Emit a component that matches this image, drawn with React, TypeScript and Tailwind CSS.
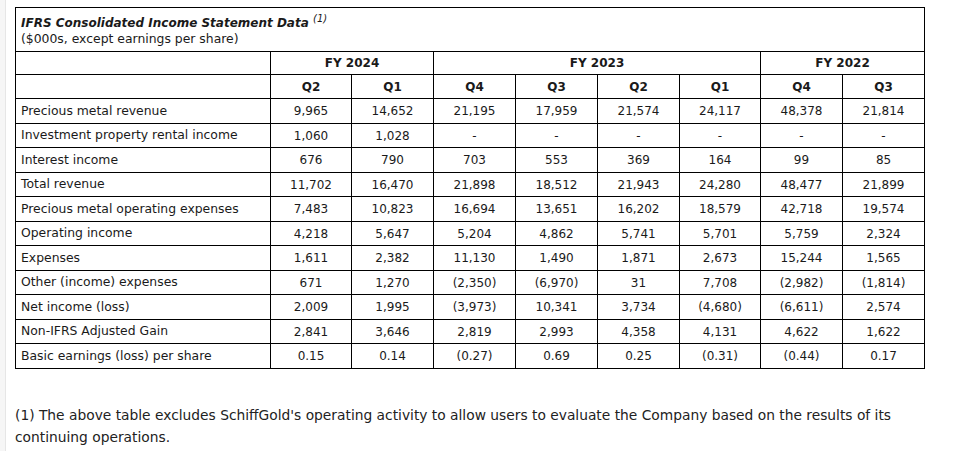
import React from "react";

const cols = ["Q2", "Q1", "Q4", "Q3", "Q2", "Q1", "Q4", "Q3"];

const rows: [string, string[]][] = [
  ["Precious metal revenue", ["9,965", "14,652", "21,195", "17,959", "21,574", "24,117", "48,378", "21,814"]],
  ["Investment property rental income", ["1,060", "1,028", "-", "-", "-", "-", "-", "-"]],
  ["Interest income", ["676", "790", "703", "553", "369", "164", "99", "85"]],
  ["Total revenue", ["11,702", "16,470", "21,898", "18,512", "21,943", "24,280", "48,477", "21,899"]],
  ["Precious metal operating expenses", ["7,483", "10,823", "16,694", "13,651", "16,202", "18,579", "42,718", "19,574"]],
  ["Operating income", ["4,218", "5,647", "5,204", "4,862", "5,741", "5,701", "5,759", "2,324"]],
  ["Expenses", ["1,611", "2,382", "11,130", "1,490", "1,871", "2,673", "15,244", "1,565"]],
  ["Other (income) expenses", ["671", "1,270", "(2,350)", "(6,970)", "31", "7,708", "(2,982)", "(1,814)"]],
  ["Net income (loss)", ["2,009", "1,995", "(3,973)", "10,341", "3,734", "(4,680)", "(6,611)", "2,574"]],
  ["Non-IFRS Adjusted Gain", ["2,841", "3,646", "2,819", "2,993", "4,358", "4,131", "4,622", "1,622"]],
  ["Basic earnings (loss) per share", ["0.15", "0.14", "(0.27)", "0.69", "0.25", "(0.31)", "(0.44)", "0.17"]],
];

const widths = [255, 81, 82, 82, 82, 82, 81, 82, 82];

export default function App() {
  return (
    <div
      className="flex min-h-[451px] w-[968px] bg-white text-[#1a1a1a]"
      style={{ fontFamily: '"DejaVu Sans", Verdana, sans-serif' }}
    >
      <div className="w-[6px] shrink-0 border-r border-[#e6e6e6] bg-[#f6f6f6]" />
      <div className="flex flex-col pl-[9px] pt-[7px]">
        <table className="w-[910px] table-fixed border-collapse text-[12px]">
          <colgroup>
            {widths.map((w, i) => (
              <col key={i} style={{ width: w }} />
            ))}
          </colgroup>
          <tbody>
            <tr className="h-[44px]">
              <td colSpan={9} className="border border-black px-[5px] pt-[5px] pb-[3px] align-middle leading-[16px]">
                <div className="font-bold italic text-[12px]">
                  IFRS Consolidated Income Statement Data{" "}
                  <sup className="text-[10px] font-normal">(1)</sup>
                </div>
                <div className="text-[12.4px]">($000s, except earnings per share)</div>
              </td>
            </tr>
            <tr className="h-[23px]">
              <td className="border border-black" />
              <td colSpan={2} className="border border-black text-center font-bold">FY 2024</td>
              <td colSpan={4} className="border border-black text-center font-bold">FY 2023</td>
              <td colSpan={2} className="border border-black text-center font-bold">FY 2022</td>
            </tr>
            <tr className="h-[24px]">
              <td className="border border-black" />
              {cols.map((c, i) => (
                <td key={i} className="border border-black text-center font-bold">{c}</td>
              ))}
            </tr>
            {rows.map(([label, vals], r) => (
              <tr key={label} className={r % 2 === 0 ? "h-[25px]" : "h-[24px]"}>
                <td className="border border-black px-[5px] whitespace-nowrap text-[12.4px]">{label}</td>
                {vals.map((v, i) => (
                  <td key={i} className="border border-black text-center">{v}</td>
                ))}
              </tr>
            ))}
          </tbody>
        </table>
        <p className="mt-[35px] w-[910px] text-[13.8px] leading-[22px] text-[#222]">
          (1) The above table excludes SchiffGold's operating activity to allow users to evaluate the Company based on the results of its continuing operations.
        </p>
      </div>
    </div>
  );
}
